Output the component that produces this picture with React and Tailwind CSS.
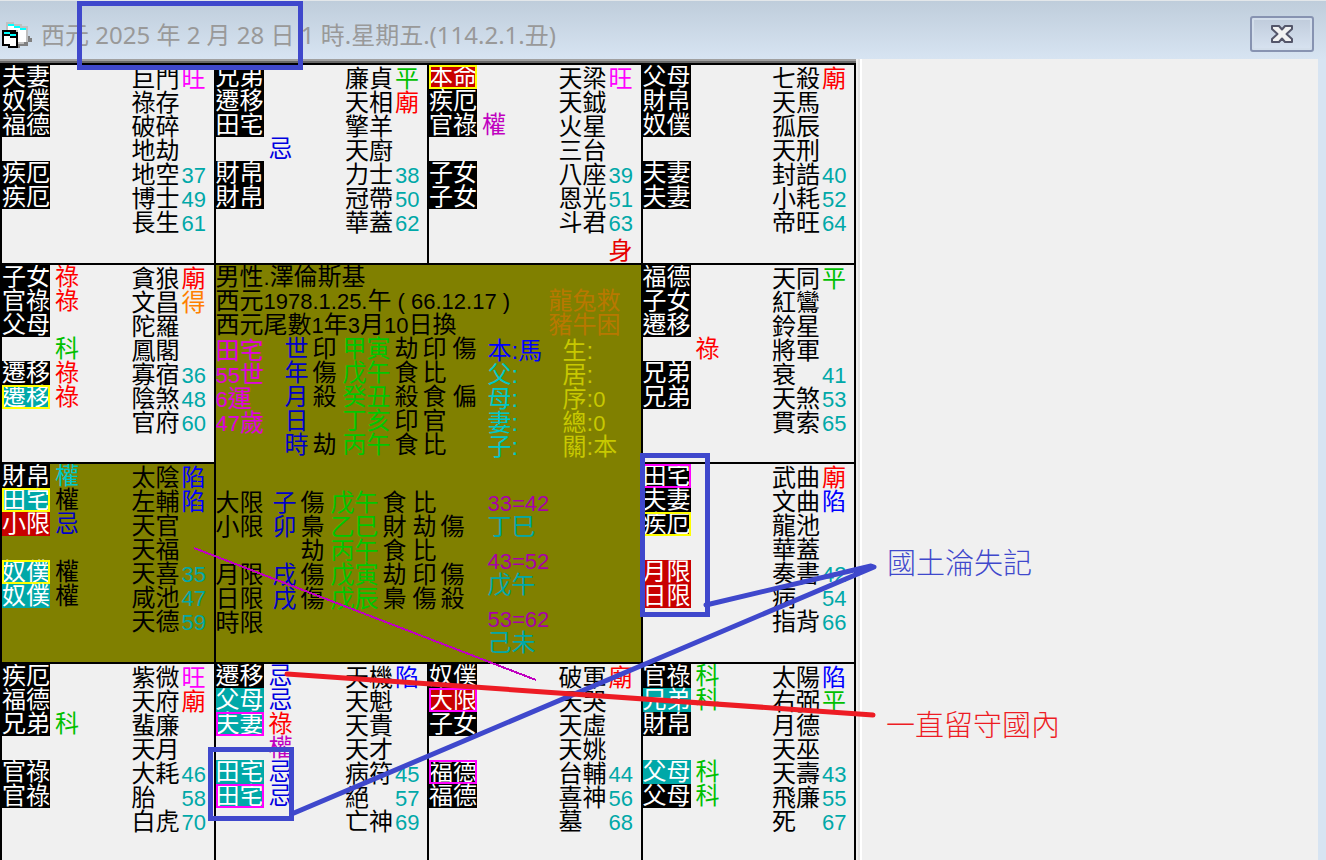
import { clsx } from "clsx";

const TAG_STYLES = {
  black: "bg-black",
  red: "bg-[#c80000]",
  teal: "bg-[#00a8a8]",
};

const RING_STYLES = {
  yellow: "border-2 border-[#ffff00]",
  pink: "border-2 border-[#ff00ff]",
};

const TEXT_COLORS = {
  旺: "text-[#ff00ff]",
  平: "text-[#00c000]",
  廟: "text-[#ff0000]",
  得: "text-[#ff8000]",
  陷: "text-[#0000ff]",
  祿: "text-[#ff0000]",
  科: "text-[#00c000]",
  權: "text-[#c000c0]",
  忌: "text-[#0000e0]",
};

// tags: [label, background, ring, mark, mark colour]
const PALACES = [
  {
    id: "si",
    tags: [["夫妻"], ["奴僕"], ["福德"], [], ["疾厄"], ["疾厄"]],
    stars: ["巨門 旺", "祿存", "破碎", "地劫", "地空 37", "博士 49", "長生 61"],
  },
  {
    id: "wu",
    tags: [["兄弟"], ["遷移"], ["田宅"], [null, null, null, "忌"], ["財帛"], ["財帛"]],
    stars: ["廉貞 平", "天相 廟", "擎羊", "天廚", "力士 38", "冠帶 50", "華蓋 62"],
  },
  {
    id: "wei",
    tags: [["本命", "red", "yellow"], ["疾厄"], ["官祿", null, null, "權"], [], ["子女"], ["子女"]],
    stars: ["天梁 旺", "天鉞", "火星", "三台", "八座 39", "恩光 51", "斗君 63"],
    foot: "身",
  },
  {
    id: "shen",
    tags: [["父母"], ["財帛"], ["奴僕"], [], ["夫妻"], ["夫妻"]],
    stars: ["七殺 廟", "天馬", "孤辰", "天刑", "封誥 40", "小耗 52", "帝旺 64"],
  },
  {
    id: "chen",
    tags: [
      ["子女", null, null, "祿"],
      ["官祿", null, null, "祿"],
      ["父母"],
      [null, null, null, "科"],
      ["遷移", null, null, "祿"],
      ["遷移", "teal", "yellow", "祿"],
    ],
    stars: ["貪狼 廟", "文昌 得", "陀羅", "鳳閣", "寡宿 36", "陰煞 48", "官府 60"],
  },
  { id: "center" },
  {
    id: "you",
    tags: [["福德"], ["子女"], ["遷移"], [null, null, null, "祿"], ["兄弟"], ["兄弟"]],
    stars: ["天同 平", "紅鸞", "鈴星", "將軍", "衰 41", "天煞 53", "貫索 65"],
  },
  {
    id: "mao",
    active: true,
    tags: [
      ["財帛", null, null, "權", "text-[#00c8c8]"],
      ["田宅", "teal", "yellow", "權", "text-black"],
      ["小限", "red", null, "忌", "text-[#0000c8]"],
      [],
      ["奴僕", "teal", "yellow", "權", "text-black"],
      ["奴僕", "teal", null, "權", "text-black"],
    ],
    stars: ["太陰 陷", "左輔 陷", "天官", "天福", "天喜 35", "咸池 47", "天德 59"],
  },
  {
    id: "xu",
    tags: [["田宅", null, "pink"], ["夫妻"], ["疾厄", null, "yellow"], [], ["月限", "red"], ["日限", "red"]],
    stars: ["武曲 廟", "文曲 陷", "龍池", "華蓋", "奏書 42", "病 54", "指背 66"],
  },
  {
    id: "yin",
    tags: [["疾厄"], ["福德"], ["兄弟", null, null, "科"], [], ["官祿"], ["官祿"]],
    stars: ["紫微 旺", "天府 廟", "蜚廉", "天月", "大耗 46", "胎 58", "白虎 70"],
  },
  {
    id: "chou",
    tags: [
      ["遷移", null, null, "忌"],
      ["父母", "teal", null, "忌"],
      ["夫妻", "teal", "pink", "祿"],
      [null, null, null, "權"],
      ["田宅", "teal", null, "忌"],
      ["田宅", "teal", "pink", "忌"],
    ],
    stars: ["天機 陷", "天魁", "天貴", "天才", "病符 45", "絕 57", "亡神 69"],
  },
  {
    id: "zi",
    tags: [["奴僕"], ["大限", "red", "pink"], ["子女"], [], ["福德", null, "pink"], ["福德"]],
    stars: ["破軍 廟", "天哭", "天虛", "天姚", "台輔 44", "喜神 56", "墓 68"],
  },
  {
    id: "hai",
    tags: [
      ["官祿", null, null, "科"],
      ["兄弟", "teal", null, "科"],
      ["財帛"],
      [],
      ["父母", "teal", null, "科"],
      ["父母", null, null, "科"],
    ],
    stars: ["太陽 陷", "右弼 平", "月德", "天巫", "天壽 43", "飛廉 55", "死 67"],
  },
];

const PILLARS = [
  ["世", "印", "甲寅", "劫", "印", "傷"],
  ["年", "傷", "戊午", "食", "比", ""],
  ["月", "殺", "癸丑", "殺", "食", "偏"],
  ["日", "", "丁亥", "印", "官", ""],
  ["時", "劫", "丙午", "食", "比", ""],
];

const LIMITS = [
  ["大限", "子", "傷", "戊午", "食", "比", ""],
  ["小限", "卯", "梟", "乙巳", "財", "劫", "傷"],
  ["", "", "劫", "丙午", "食", "比", ""],
  ["月限", "戌", "傷", "戊寅", "劫", "印", "傷"],
  ["日限", "戌", "傷", "戊辰", "梟", "傷", "殺"],
  ["時限", "", "", "", "", "", ""],
];

const DECADES = [
  ["33=42", "丁巳"],
  ["43=52", "戊午"],
  ["53=62", "己未"],
];

// Digits are half as wide as a character
const Num = ({ children }) => (
  <span className="text-[22px] leading-none">{children}</span>
);

const Tag = ({ tag: [label, tone, ring, mark, markColor] }) => (
  <li className="flex h-6 gap-[5px]">
    <span
      className={clsx(
        "relative h-6 w-12 text-white",
        label && TAG_STYLES[tone || "black"],
      )}
    >
      {label}
      {ring ? (
        <span className={clsx("absolute inset-0", RING_STYLES[ring])} />
      ) : null}
    </span>
    {mark ? (
      <span className={markColor || TEXT_COLORS[mark]}>{mark}</span>
    ) : null}
  </li>
);

const Star = ({ star }) => {
  const [name, note] = star.split(" ");
  const color = TEXT_COLORS[note];
  return (
    <li className="flex h-6 gap-[2px]">
      <span className="w-12">{name}</span>
      <span className={clsx("w-6", color || "text-[#00a8a8]")}>
        {color ? note : <Num>{note}</Num>}
      </span>
    </li>
  );
};

const Palace = ({ palace }) => (
  <section
    className={clsx(
      "flex justify-between overflow-hidden pr-2",
      palace.active ? "bg-[#808000]" : "bg-[#f0f0f0]",
    )}
  >
    <ul>
      {palace.tags.map((tag, i) => (
        <Tag key={i} tag={tag} />
      ))}
    </ul>
    <div className="flex flex-col pt-[2px]">
      <ul>
        {palace.stars.map((star) => (
          <Star key={star} star={star} />
        ))}
      </ul>
      {palace.foot ? (
        <p className="mt-auto text-right text-[#e60000]">{palace.foot}</p>
      ) : null}
    </div>
  </section>
);

const Center = () => (
  <section className="col-span-2 row-span-2 overflow-hidden bg-[#808000]">
    <div className="flex justify-between pr-5">
      <div>
        <p className="h-6">
          男性<Num>.</Num>澤倫斯基
        </p>
        <p className="h-6">
          西元<Num>1978.1.25.</Num>午<Num> ( 66.12.17 )</Num>
        </p>
        <p className="h-6">
          西元尾數<Num>1</Num>年<Num>3</Num>月<Num>10</Num>日換
        </p>
      </div>
      <div className="pt-6 text-[#b87800]">
        <p>龍兔救</p>
        <p>豬牛困</p>
      </div>
    </div>

    <div className="flex items-start">
      <div className="w-[69px] pt-[2px] text-[#e000e0]">
        <p className="h-6">田宅</p>
        <p className="h-6">
          <Num>55</Num>世
        </p>
        <p className="h-6">
          <Num>6</Num>運
        </p>
        <p className="h-6">
          <Num>47</Num>歲
        </p>
      </div>
      <table className="w-[203px] table-fixed text-left">
        <colgroup>
          <col className="w-7" />
          <col className="w-[30px]" />
          <col className="w-[52px]" />
          <col className="w-7" />
          <col className="w-[30px]" />
          <col />
        </colgroup>
        <tbody>
          {PILLARS.map(([name, ...cells]) => (
            <tr key={name} className="h-6">
              <th className="p-0 font-normal text-[#0000c8]">{name}</th>
              {cells.map((cell, i) => (
                <td key={i} className={clsx("p-0", i === 1 && "text-[#00c800]")}>
                  {cell}
                </td>
              ))}
            </tr>
          ))}
        </tbody>
      </table>
      <div className="w-[75px] pt-[2px] text-[#00c8c8]">
        <p className="text-[#0000ff]">本:馬</p>
        <p>父:</p>
        <p>母:</p>
        <p>妻:</p>
        <p>子:</p>
      </div>
      <div className="pt-[2px] text-[#c8c800]">
        <p className="h-6">生:</p>
        <p className="h-6">居:</p>
        <p className="h-6">
          序:<Num>0</Num>
        </p>
        <p className="h-6">
          總:<Num>0</Num>
        </p>
        <p className="h-6">關:本</p>
      </div>
    </div>

    <div className="mt-8 flex items-start">
      <table className="w-[272px] table-fixed text-left">
        <colgroup>
          <col className="w-[57px]" />
          <col className="w-7" />
          <col className="w-[30px]" />
          <col className="w-[52px]" />
          <col className="w-[30px]" />
          <col className="w-7" />
          <col />
        </colgroup>
        <tbody>
          {LIMITS.map(([name, ...cells], row) => (
            <tr key={row} className="h-6">
              <th className="p-0 font-normal">{name}</th>
              {cells.map((cell, i) => (
                <td
                  key={i}
                  className={clsx(
                    "p-0",
                    i === 0 && "text-[#0000c8]",
                    i === 2 && "text-[#00c800]",
                  )}
                >
                  {cell}
                </td>
              ))}
            </tr>
          ))}
        </tbody>
      </table>
      <div className="flex flex-col gap-[10px]">
        {DECADES.map(([years, pillar]) => (
          <div key={years}>
            <p className="h-6 text-[#a800a8]">
              <Num>{years}</Num>
            </p>
            <p className="text-[#00a8a8]">{pillar}</p>
          </div>
        ))}
      </div>
    </div>
  </section>
);

const FormsIcon = () => (
  <svg className="h-7 w-8" viewBox="0 0 32 28" shapeRendering="crispEdges" aria-hidden="true">
    <path d="M18 21h10v4h-8v2h-2zM28 15h2v2h2v4h-4z" fill="#808080" />
    <path d="M6 1h8v2h8v2h6v16h-4v2H8V11H6z" fill="#c0c0c0" />
    <path d="M8 5h6v2h8v2h4v12h-8V9H8z" fill="#fff" />
    <path d="M8 3h6v2h6v2h6v2h-6V7h-6V5H8z" fill="#00ffff" />
    <path d="M2 9h14v2h2v16H8v-2H2z" fill="#000" />
    <path d="M4 15h6v2h6v8H10v-2H4z" fill="#fff" />
    <path d="M4 11h6v2h6v2h-6v-2H4z" fill="#00ffff" />
  </svg>
);

const TitleBar = () => (
  <header className="flex h-[59px] items-center justify-between border-t border-[#e3e7ea] bg-gradient-to-b from-[#bfcddb] to-[#d7e4f2] pr-3">
    <div className="flex items-center gap-[9px] pt-[10px]">
      <FormsIcon />
      <h1 className="font-['Noto_Sans','Noto_Sans_CJK_TC',sans-serif] text-[24px] leading-7 whitespace-pre text-[#999999]">
        西元 2025 年 2 月 28 日 1 時.星期五.(114.2.1.丑)
      </h1>
    </div>
    <button
      type="button"
      aria-label="Close"
      className="mt-2 flex h-9 w-16 items-center justify-center rounded-[3px] border-2 border-[#8793b1] bg-gradient-to-b from-[#bfcbdb] to-[#d8e3f1] inset-ring-2 inset-ring-[#d3deeb]"
    >
      <svg className="h-[18px] w-[22px]" viewBox="0 0 22 18" aria-hidden="true">
        <path
          d="M1 1h7l3 3.5L14 1h7v3l-5.500 5L21 14v3h-7l-3-3.500L8 17H1v-3l5.500-5L1 4z"
          fill="#f2f2f2"
          stroke="#54566a"
          strokeWidth="2"
          strokeLinejoin="round"
        />
      </svg>
    </button>
  </header>
);

// Hand-drawn markup laid over the whole window
const Annotations = () => (
  <div className="pointer-events-none absolute inset-0">
    <svg className="h-[860px] w-[1326px]" viewBox="0 0 1326 860" fill="none" aria-hidden="true">
      <path d="M194 548 536 680" stroke="#c000c0" strokeWidth="2" shapeRendering="crispEdges" />
      <g stroke="#3f48cc" strokeWidth="5">
        <rect x="79.500" y="3.500" width="221" height="64" />
        <rect x="642.500" y="455.500" width="65" height="159" />
        <rect x="210.500" y="749.500" width="81" height="69" />
        <path d="M706 605 871 566 874 567 294 813" strokeLinecap="round" strokeLinejoin="round" />
      </g>
      <path d="M287 674 873 715" stroke="#ed1c24" strokeWidth="5" strokeLinecap="round" />
    </svg>
    <p className="absolute top-[545px] left-[887px] text-[29px] leading-8 font-light text-[#3f48cc]">
      國土淪失記
    </p>
    <p className="absolute top-[707px] left-[886px] text-[29px] leading-8 font-light text-[#ed1c24]">
      一直留守國內
    </p>
  </div>
);

export default function App() {
  return (
    <div className="relative flex h-screen flex-col overflow-hidden bg-[#d7e4f2] font-['Noto_Sans_CJK_TC',sans-serif]">
      <TitleBar />
      <main className="mr-2 flex min-h-0 flex-1 bg-[#f0f0f0]">
        <div className="w-[64%] min-w-[856px]">
          <div className="h-1 border-t-2 border-[#a0a0a0] bg-[#696969]" />
          <div className="grid grid-cols-4 grid-rows-[198px_197px_198px_198px] gap-[2px] border-2 border-black bg-black font-['Liberation_Sans','Noto_Sans_CJK_TC',sans-serif] text-[24px] leading-6 whitespace-nowrap">
            {PALACES.map((palace) =>
              palace.id === "center" ? (
                <Center key={palace.id} />
              ) : (
                <Palace key={palace.id} palace={palace} />
              ),
            )}
          </div>
        </div>
        <div className="ml-[2px] w-1 border-r-2 border-l-2 border-r-white border-l-[#e3e3e3]" />
      </main>
      <Annotations />
    </div>
  );
}
